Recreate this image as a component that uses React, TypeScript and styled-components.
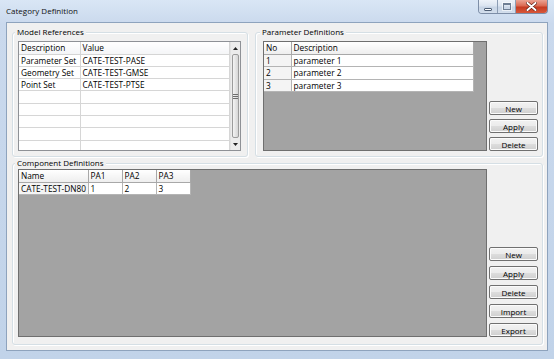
import styled, { createGlobalStyle } from "styled-components";

const GlobalStyle = createGlobalStyle`
  html, body {
    margin: 0;
    padding: 0;
    background: #ffffff;
  }
  body {
    font-family: "Open Sans", "Liberation Sans", sans-serif;
    font-size: 8.3px;
    color: #000;
  }
  * {
    box-sizing: border-box;
  }
`;

// window frame
const Window = styled.div`
  width: 554px;
  height: 359px;
  display: flex;
  flex-direction: column;
  background: linear-gradient(180deg, #d9e6f5 0px, #cad9ed 24px, #c1d3e9 100%);
`;
const TitleBar = styled.div`
  height: 22px;
  flex: none;
  display: flex;
  justify-content: space-between;
  align-items: flex-start;
`;
const Title = styled.div`
  padding-left: 6px;
  line-height: 22px;
  font-size: 8px;
  color: #111;
`;
const CaptionGroup = styled.div`
  display: flex;
  margin-right: 6px;
  height: 14px;
  border: 1px solid #7d8ea7;
  border-top: none;
  border-radius: 0 0 4px 4px;
  overflow: hidden;
`;
const CaptionButton = styled.div<{ $kind: "min" | "max" | "close" }>`
  width: ${(p) => (p.$kind === "close" ? 32 : 18)}px;
  display: flex;
  align-items: center;
  justify-content: center;
  border-left: ${(p) => (p.$kind === "min" ? "none" : "1px solid #8c9db4")};
  background: ${(p) =>
    p.$kind === "close"
      ? "linear-gradient(180deg, #eba393 0%, #db6a52 45%, #c63b22 55%, #d8583a 100%)"
      : "linear-gradient(180deg, #eef3f9 0%, #dbe4f0 45%, #c8d5e6 55%, #d3deec 100%)"};
`;
const MinGlyph = styled.div`
  width: 8px;
  height: 3px;
  margin-top: 5px;
  background: #fff;
  border: 1px solid #4f5f75;
  border-radius: 1px;
`;
const MaxGlyph = styled.div`
  width: 8px;
  height: 7px;
  border: 1px solid #6e7e94;
  border-top-width: 2px;
  background: transparent;
  box-shadow: 0 0 0 1px rgba(255, 255, 255, 0.6);
`;

const Client = styled.div`
  flex: 1;
  margin: 0 6px 8px 6px;
  border: 1px solid #8ea3bd;
  background: #f0f0f0;
  padding: 4px 4px 5px 5px;
  display: flex;
  flex-direction: column;
  gap: 1px;
`;
const TopRow = styled.div`
  display: grid;
  grid-template-columns: 236px 1fr;
  column-gap: 7px;
`;

// group boxes
const Group = styled.fieldset<{ $pad: string }>`
  margin: 0;
  min-width: 0;
  padding: ${(p) => p.$pad};
  border: 1px solid #d5dfe5;
  border-radius: 3px;
  box-shadow: inset 1px 1px 0 #ffffff, 1px 1px 0 #ffffff;
`;
const GroupLabel = styled.legend`
  margin-left: -3px;
  padding: 0 2px;
  line-height: 10px;
  font-size: 8px;
  color: #000;
  background: #f0f0f0;
`;
const GroupBody = styled.div`
  display: flex;
  gap: 2px;
`;
const ButtonColumn = styled.div<{ $gap: number }>`
  width: 49px;
  flex: none;
  display: flex;
  flex-direction: column;
  justify-content: flex-end;
  gap: ${(p) => p.$gap}px;
`;
const Button = styled.button`
  height: 14px;
  padding: 0;
  font-family: inherit;
  font-size: 8px;
  color: #000;
  border: 1px solid #707070;
  border-radius: 2px;
  background: linear-gradient(180deg, #f2f2f2 0%, #ebebeb 50%, #dddddd 51%, #cfcfcf 100%);
  box-shadow: inset 0 0 0 1px #fbfbfb;
`;

// list view with scrollbar
const ListView = styled.div`
  width: 223px;
  height: 110px;
  display: flex;
  border: 1px solid #8e9196;
  background: #fff;
  overflow: hidden;
`;
const ListTable = styled.table`
  flex: 1;
  align-self: flex-start;
  border-collapse: collapse;
  table-layout: fixed;
`;
const ListHead = styled.th<{ $w?: number }>`
  width: ${(p) => (p.$w ? `${p.$w}px` : "auto")};
  height: 12px;
  padding: 0 2px;
  text-align: left;
  font-weight: normal;
  line-height: 11px;
  background: linear-gradient(180deg, #ffffff 0%, #f4f5f7 100%);
  border-right: 1px solid #d5d5d5;
  border-bottom: 1px solid #d5d5d5;
`;
const ListCell = styled.td`
  height: 12.3px;
  padding: 0 2px;
  line-height: 11px;
  white-space: nowrap;
  overflow: hidden;
  border-right: 1px solid #d6d6d6;
  border-bottom: 1px solid #d6d6d6;
`;
const Scrollbar = styled.div`
  width: 10px;
  flex: none;
  display: flex;
  flex-direction: column;
  background: #ececec;
  border-left: 1px solid #e2e2e2;
`;
const ScrollArrow = styled.div`
  height: 12px;
  flex: none;
  display: flex;
  align-items: center;
  justify-content: center;
`;
const ScrollThumb = styled.div`
  flex: 1;
  margin: 0 1px;
  border: 1px solid #9b9b9b;
  border-radius: 2px;
  background: linear-gradient(90deg, #f4f4f4 0%, #e3e3e3 55%, #d6d6d6 100%);
  display: flex;
  align-items: center;
  justify-content: center;
`;
const Grip = styled.div`
  width: 5px;
  height: 5px;
  background: repeating-linear-gradient(180deg, #6d6d6d 0 1px, transparent 1px 2px);
`;

// data grid
const DataGrid = styled.div<{ $h: number }>`
  flex: 1;
  height: ${(p) => p.$h}px;
  border: 1px solid #6f6f6f;
  background: #a3a3a3;
  overflow: hidden;
`;
const GridTable = styled.table<{ $w: number }>`
  width: ${(p) => p.$w}px;
  border-collapse: collapse;
  table-layout: fixed;
`;
const GridHead = styled.th<{ $w?: number }>`
  width: ${(p) => (p.$w ? `${p.$w}px` : "auto")};
  height: 12px;
  padding: 0 2px;
  text-align: left;
  font-weight: normal;
  line-height: 11px;
  background: linear-gradient(180deg, #ffffff 0%, #eeeeee 100%);
  border-right: 1px solid #a8a8a8;
  border-bottom: 1px solid #a8a8a8;
`;
const GridCell = styled.td<{ $header?: boolean }>`
  height: 12.5px;
  padding: 0 2px;
  line-height: 11px;
  white-space: nowrap;
  overflow: hidden;
  background: ${(p) => (p.$header ? "#f4f4f4" : "#ffffff")};
  border-right: 1px solid #b4b4b4;
  border-bottom: 1px solid #b4b4b4;
`;

const Arrow = ({ down }: { down?: boolean }) => (
  <svg width="5" height="3" viewBox="0 0 5 3">
    <path d={down ? "M0 0 L5 0 L2.5 3 Z" : "M0 3 L5 3 L2.5 0 Z"} fill="#222" />
  </svg>
);

const modelRefs = [
  ["Parameter Set", "CATE-TEST-PASE"],
  ["Geometry Set", "CATE-TEST-GMSE"],
  ["Point Set", "CATE-TEST-PTSE"],
  ["", ""],
  ["", ""],
  ["", ""],
  ["", ""],
  ["", ""],
];

const params = [
  ["1", "parameter 1"],
  ["2", "parameter 2"],
  ["3", "parameter 3"],
];

export default function App() {
  return (
    <>
      <GlobalStyle />
      <Window>
        <TitleBar>
          <Title>Category Definition</Title>
          <CaptionGroup>
            <CaptionButton $kind="min">
              <MinGlyph />
            </CaptionButton>
            <CaptionButton $kind="max">
              <MaxGlyph />
            </CaptionButton>
            <CaptionButton $kind="close">
              <svg width="11" height="9" viewBox="0 0 11 9">
                <path
                  d="M1.5 1 L9.5 8 M9.5 1 L1.5 8"
                  stroke="#5a1a10"
                  strokeWidth="3.2"
                  strokeLinecap="round"
                />
                <path
                  d="M1.5 1 L9.5 8 M9.5 1 L1.5 8"
                  stroke="#ffffff"
                  strokeWidth="2"
                  strokeLinecap="round"
                />
              </svg>
            </CaptionButton>
          </CaptionGroup>
        </TitleBar>

        <Client>
          <TopRow>
            <Group $pad="4px 6px 5px 5px">
              <GroupLabel>Model References</GroupLabel>
              <ListView>
                <ListTable>
                  <thead>
                    <tr>
                      <ListHead $w={61}>Description</ListHead>
                      <ListHead>Value</ListHead>
                    </tr>
                  </thead>
                  <tbody>
                    {modelRefs.map((r, i) => (
                      <tr key={i}>
                        <ListCell>{r[0]}</ListCell>
                        <ListCell>{r[1]}</ListCell>
                      </tr>
                    ))}
                  </tbody>
                </ListTable>
                <Scrollbar>
                  <ScrollArrow>
                    <Arrow />
                  </ScrollArrow>
                  <ScrollThumb>
                    <Grip />
                  </ScrollThumb>
                  <ScrollArrow>
                    <Arrow down />
                  </ScrollArrow>
                </Scrollbar>
              </ListView>
            </Group>

            <Group $pad="4px 4px 5px 7px">
              <GroupLabel>Parameter Definitions</GroupLabel>
              <GroupBody>
                <DataGrid $h={110}>
                  <GridTable $w={210}>
                    <thead>
                      <tr>
                        <GridHead $w={27}>No</GridHead>
                        <GridHead>Description</GridHead>
                      </tr>
                    </thead>
                    <tbody>
                      {params.map((p) => (
                        <tr key={p[0]}>
                          <GridCell $header>{p[0]}</GridCell>
                          <GridCell>{p[1]}</GridCell>
                        </tr>
                      ))}
                    </tbody>
                  </GridTable>
                </DataGrid>
                <ButtonColumn $gap={4}>
                  <Button>New</Button>
                  <Button>Apply</Button>
                  <Button>Delete</Button>
                </ButtonColumn>
              </GroupBody>
            </Group>
          </TopRow>

          <Group $pad="1px 4px 7px 5px">
            <GroupLabel>Component Definitions</GroupLabel>
            <GroupBody>
              <DataGrid $h={168}>
                <GridTable $w={172}>
                  <thead>
                    <tr>
                      <GridHead $w={69}>Name</GridHead>
                      <GridHead $w={34}>PA1</GridHead>
                      <GridHead $w={34}>PA2</GridHead>
                      <GridHead>PA3</GridHead>
                    </tr>
                  </thead>
                  <tbody>
                    <tr>
                      <GridCell $header>CATE-TEST-DN80</GridCell>
                      <GridCell>1</GridCell>
                      <GridCell>2</GridCell>
                      <GridCell>3</GridCell>
                    </tr>
                  </tbody>
                </GridTable>
              </DataGrid>
              <ButtonColumn $gap={5}>
                <Button>New</Button>
                <Button>Apply</Button>
                <Button>Delete</Button>
                <Button>Import</Button>
                <Button>Export</Button>
              </ButtonColumn>
            </GroupBody>
          </Group>
        </Client>
      </Window>
    </>
  );
}
